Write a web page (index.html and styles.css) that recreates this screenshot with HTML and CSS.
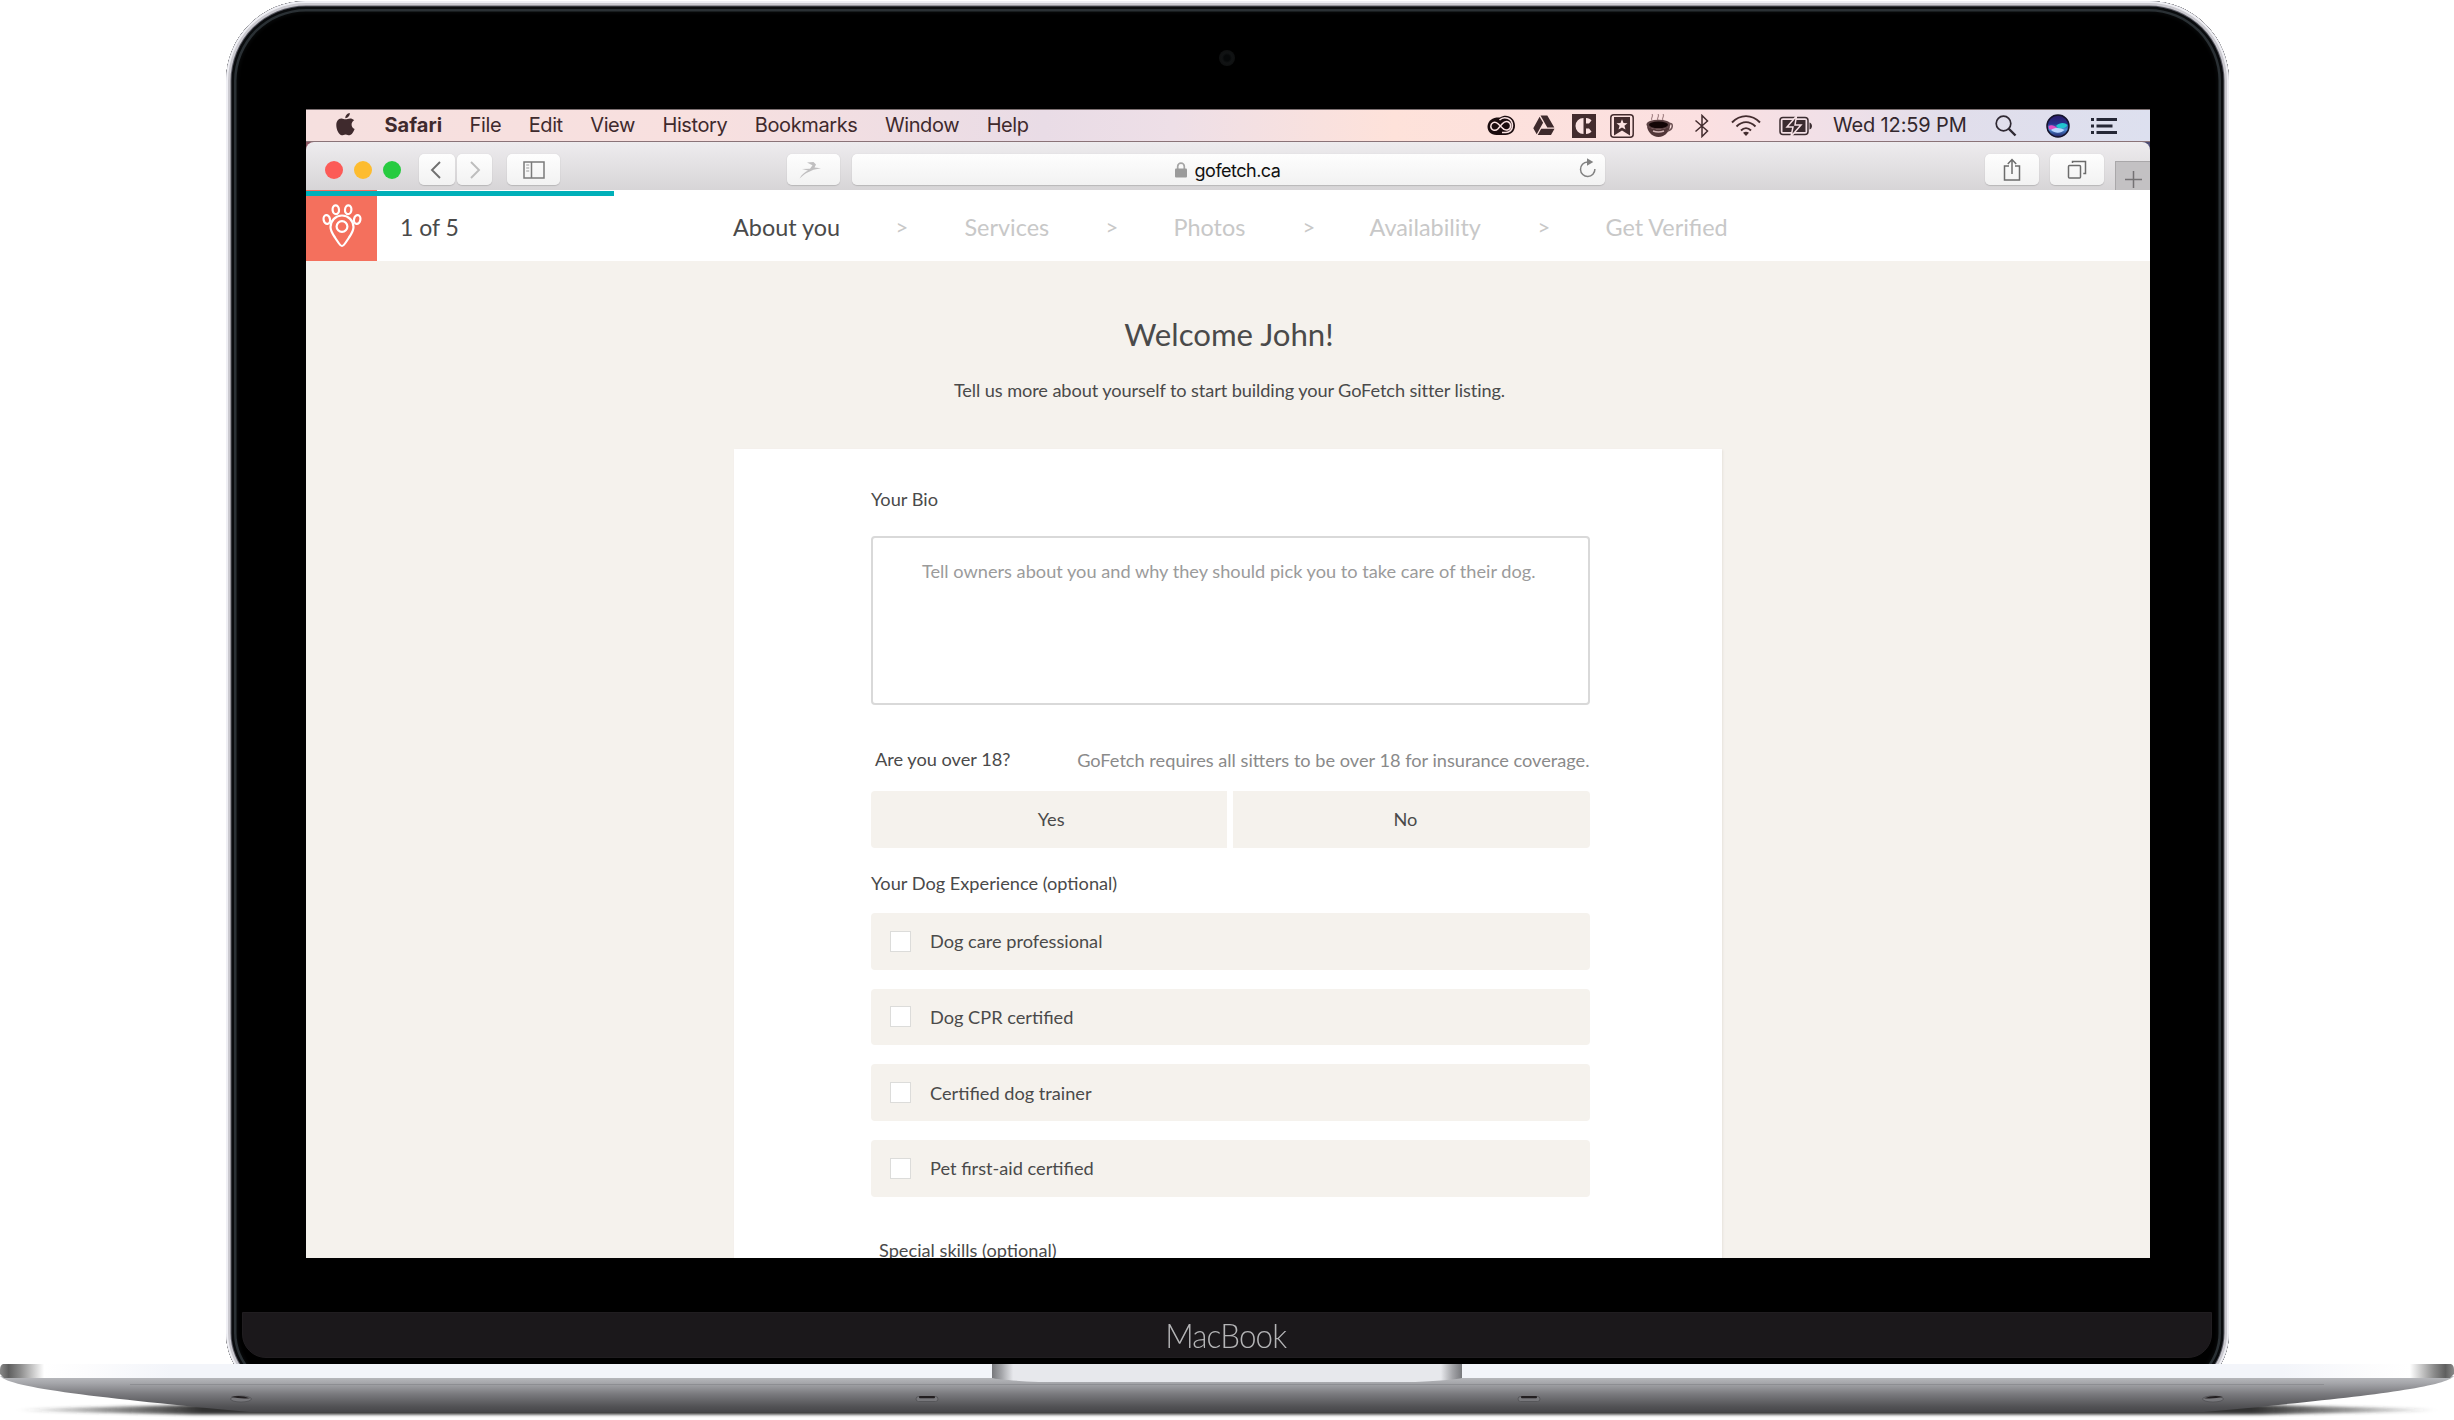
FILE: index.html
```html
<!DOCTYPE html>
<html lang="en">
<head>
<meta charset="utf-8">
<title>GoFetch – About you</title>
<link rel="stylesheet" href="styles.css">
</head>
<body>
<div class="laptop">
  <div class="lid-clip">
    <div class="lid">
      <span class="camera"></span>
      <div class="screen">
        <div class="menubar">
          <nav class="menus">
            <svg class="apple" width="19" height="24" viewBox="0 0 19 24"><path d="M9.3 6.3c-1.2 0-2.3-.9-4.100-.8C2.200 5.700.3 8.300.3 12.200c0 4.700 2.900 10 5.500 10 1.400 0 2-.8 3.800-.8s2.300.8 3.800.8c2.400 0 4.300-3.600 5.200-6.200-3.900-1.700-3.900-6.900-.4-8.700-1.200-1.300-2.700-1.900-4-1.900-2 0-3.200.9-4.900.9zM9.300 5.200c-.1-2.600 2-5 4.500-5.200.2 2.700-2 5.200-4.500 5.200z"/></svg>
            <b>Safari</b><span>File</span><span>Edit</span><span>View</span><span>History</span><span>Bookmarks</span><span>Window</span><span>Help</span>
          </nav>
          <div class="status">
            <svg width="29" height="22" viewBox="0 0 29 22"><path d="M9.500 2.500H13C19-2 28 2 28 10.500c0 6-4.500 9.500-9.500 9.500h-9C-2.500 20-2.500 4 9.500 2.500z" fill="#1b0c0e"/><path d="M17 14.500 11 8.800C7.500 5.500 3.800 8 3.800 11.300c0 4 4.500 5.200 7 2.700l4.500-5.200c3.800-4.500 8.300-1.800 8.300 2 0 4-4.600 5.700-7.600 2.700M12.500 5c4.500-4.500 13-2 13 5.800 0 4-3 6.700-6.500 6.700h-4" fill="none" stroke="#fbe2e2" stroke-width="1.500"/></svg>
            <svg width="22" height="21" viewBox="0 0 22 21"><path d="M7.500.5h6.800l7 12h-7zM6.600 1.800l3.500 6L3.700 19.200.3 13.300zM8.200 13.700h13.300l-3.500 6.300H4.700z" fill="#3e2a2c"/></svg>
            <svg width="24" height="24" viewBox="0 0 24 24"><path d="M0 0h24v24H0z" fill="#432c2e"/><path d="M11.500 4v16a8 8 0 0 1 0-16zM14 4c2.500 0 4.500 1 5.500 2.500L17 9.500h-3zM14 14.500h3l2.500 3c-1 1.500-3 2.500-5.500 2.500z" fill="#fbe2e2"/></svg>
            <svg width="24" height="24" viewBox="0 0 24 24"><rect x=".8" y=".8" width="22.400" height="22.400" rx="3" fill="none" stroke="#432c2e" stroke-width="1.500"/><path d="M4 3h16v18.500l-8-5-8 5z" fill="#432c2e"/><path d="m12 5.200 1.500 3.800 4 .2-3.100 2.500 1.100 3.900-3.500-2.200-3.500 2.200 1.100-3.900L6.500 9.200l4-.2z" fill="#fbe2e2"/></svg>
            <svg width="28" height="24" viewBox="0 0 28 24"><path d="M6 6C4 4 8 3 6 0M12 6c-2-2 2-3 0-6M17 6c-2-2 2-3 0-6" fill="none" stroke="#a68587" stroke-width="1.200"/><ellipse cx="12.500" cy="10.500" rx="12" ry="4.800" fill="#5c4244"/><ellipse cx="12.500" cy="10.800" rx="9.500" ry="3.300" fill="#120506"/><path d="M1 11.500c0 5 3.500 9 7 10.500 3 1.400 6 1.400 9 0 3.500-1.500 7-5.500 7-10.500-4 5-19 5-23 0z" fill="#523739"/><path d="M7 17c3 1 8 1 11 0" fill="none" stroke="#d4b7b8" stroke-width="1.500"/><path d="M23.500 9.500c4-1 4 6-2 7.500" fill="none" stroke="#6c5153" stroke-width="1.500"/></svg>
            <svg width="16" height="24" viewBox="0 0 16 24"><path d="m1.500 6.500 12 10.500L8 22.500v-21L13.500 7l-12 10.500" fill="none" stroke="#432c2e" stroke-width="1.500"/></svg>
            <svg width="30" height="22" viewBox="0 0 30 22"><path d="M1 7.500C9-1 21-1 29 7.500M5.500 11.500c6-5.700 13-5.700 19 0M10 15.500c3-3 7-3 10 0" fill="none" stroke="#432c2e" stroke-width="1.900"/><path d="m15 21-3-3.200c2-1.500 4-1.500 6 0z" fill="#432c2e"/></svg>
            <svg width="34" height="20" viewBox="0 0 34 20"><rect x="1" y="1.500" width="28" height="17" rx="3" fill="none" stroke="#3b2c30" stroke-width="1.500"/><path d="M3.500 4h23v12h-23z" fill="#3b2c30"/><path d="M30.500 6.500c3.300 1 3.300 6 0 7z" fill="#3b2c30"/><path d="M17.500 0 8 11h6l-2 9.500L22 9h-6z" fill="#3b2c30" stroke="#f6e1e5" stroke-width="1.500"/></svg>
            <span class="clock">Wed 12:59 PM</span>
            <svg width="22" height="22" viewBox="0 0 22 22"><circle cx="8.500" cy="8.500" r="7.300" fill="none" stroke="#2f2933" stroke-width="1.700"/><path d="m13.500 13.500 7 7" stroke="#2f2933" stroke-width="2.400"/></svg>
            <svg width="24" height="24" viewBox="0 0 24 24"><defs><linearGradient id="siri" x1="0" y1="0" x2="0" y2="1"><stop offset="0" stop-color="#2b1a66"/><stop offset=".4" stop-color="#25308c"/><stop offset=".65" stop-color="#4b8fd8"/><stop offset="1" stop-color="#201c62"/></linearGradient></defs><circle cx="12" cy="12" r="11" fill="url(#siri)" stroke="#14132b" stroke-width="1.500"/><path d="M2.500 12c3-2 7 0 9 2.500-3 1.500-6 1.500-8.500.5z" fill="#e24fc4"/><path d="M10 12c4-4 9-3.500 11.500-1-1 3-6 4-9 3.500z" fill="#20c4cf"/><path d="M5 16c4-3 10-2 13.500 0-3 3-9 4-13.500 0z" fill="#b9d6ff"/></svg>
            <svg width="26" height="18" viewBox="0 0 26 18"><path d="M0 2.500h3M5.500 2.500H26M0 9h3M5.500 9h16M0 15.500h3M5.500 15.500H26" stroke="#262836" stroke-width="2.800"/></svg>
          </div>
        </div>

        <div class="window">
          <div class="toolbar">
            <div class="lights"><i class="red"></i><i class="amber"></i><i class="green"></i></div>
            <div class="tb back"><svg width="12" height="18" viewBox="0 0 12 18"><path d="M10 1 2 9l8 8" fill="none" stroke="#6f6f6f" stroke-width="1.900"/></svg></div>
            <div class="tb fwd"><svg width="12" height="18" viewBox="0 0 12 18"><path d="m2 1 8 8-8 8" fill="none" stroke="#bdbdbd" stroke-width="1.900"/></svg></div>
            <div class="tb side"><svg width="22" height="18" viewBox="0 0 22 18"><path d="M1 1h20v16H1zM8.500 1v16" fill="none" stroke="#7b7b7b" stroke-width="1.500"/><path d="M3.200 4h3M3.200 7h3M3.200 10h3" stroke="#9a9a9a" stroke-width="1.200"/></svg></div>
            <div class="tb bird"><svg width="22" height="18" viewBox="0 0 22 18"><path d="M.5 17.500C3 13 6 11 9 9.500L3 8l8-.3 2.500-3.500L8 1.500 14.500 1l2.500 2.500-1.500 3 6.500.8-7.500 1.500L8 11.800C5 13.500 3 15.500.5 17.500z" fill="#c0bfc0"/></svg></div>
            <div class="tb url">
              <div class="host"><svg width="12" height="16" viewBox="0 0 12 16"><path d="M2.700 7V4.500a3.300 3.300 0 0 1 6.600 0V7" fill="none" stroke="#a6a6a6" stroke-width="1.700"/><rect y="6.500" width="12" height="9" rx="1" fill="#9b9b9b"/></svg><span>gofetch.ca</span></div>
              <svg class="reload" width="17" height="20" viewBox="0 0 17 20"><path d="M8.500 4a7.200 7.200 0 1 0 7.400 7" fill="none" stroke="#828282" stroke-width="1.500"/><path d="m8 .3 6.300 3.700L8 7.800z" fill="#828282"/></svg>
            </div>
            <div class="tb share"><svg width="18" height="24" viewBox="0 0 18 24"><path d="M6 8H1.500v14h15V8H12M9 16V2M4.800 6 9 1.500 13.200 6" fill="none" stroke="#6c6c6c" stroke-width="1.500"/></svg></div>
            <div class="tb tabs"><svg width="20" height="19" viewBox="0 0 20 19"><rect x="1.500" y="5.500" width="12" height="12.500" rx="1" fill="none" stroke="#6c6c6c" stroke-width="1.500"/><path d="M5.500 3V1.500h13v12h-2.200" fill="none" stroke="#6c6c6c" stroke-width="1.500"/></svg></div>
            <div class="newtab"><svg width="17" height="17" viewBox="0 0 17 17"><path d="M8.500 0v17M0 8.500h17" stroke="#747274" stroke-width="1.500"/></svg></div>
          </div>

          <header class="header">
            <span class="progress"></span>
            <div class="logo"><svg width="40" height="44" viewBox="0 0 40 44" fill="none" stroke="#fff" stroke-width="2.200"><ellipse cx="13.800" cy="5.800" rx="3.200" ry="4.400" transform="rotate(-5 13.800 5.800)"/><ellipse cx="26.200" cy="5.800" rx="3.200" ry="4.400" transform="rotate(5 26.200 5.800)"/><ellipse cx="4.800" cy="15.500" rx="3.200" ry="4.400" transform="rotate(-10 4.800 15.500)"/><ellipse cx="35.200" cy="15.500" rx="3.200" ry="4.400" transform="rotate(10 35.200 15.500)"/><path d="M20 42c-2 0-4-4-7-8.500-3.500-5-4.500-7.500-4.500-10.500a11.500 11.500 0 0 1 23 0c0 3-1 5.500-4.500 10.500C24 38 22 42 20 42z"/><circle cx="20" cy="22.500" r="5.400"/></svg></div>
            <span class="count">1 of 5</span>
            <nav class="steps"><span class="on">About you</span><i>&gt;</i><span>Services</span><i>&gt;</i><span>Photos</span><i>&gt;</i><span>Availability</span><i>&gt;</i><span>Get Verified</span></nav>
          </header>

          <main class="page">
            <h1>Welcome John!</h1>
            <p class="lead">Tell us more about yourself to start building your GoFetch sitter listing.</p>
            <section class="card">
              <p class="label">Your Bio</p>
              <div class="bio">Tell owners about you and why they should pick you to take care of their dog.</div>
              <div class="age"><span>Are you over 18?</span><span class="note">GoFetch requires all sitters to be over 18 for insurance coverage.</span></div>
              <div class="choice"><div class="yes">Yes</div><div class="no">No</div></div>
              <p class="label exp">Your Dog Experience (optional)</p>
              <div class="options">
                <div class="option"><i></i>Dog care professional</div>
                <div class="option"><i></i>Dog CPR certified</div>
                <div class="option"><i></i>Certified dog trainer</div>
                <div class="option"><i></i>Pet first-aid certified</div>
              </div>
              <p class="label skills">Special skills (optional)</p>
            </section>
          </main>
        </div>
      </div>
      <div class="chin"><span>MacBook</span></div>
    </div>
  </div>
  <svg class="base" width="2454" height="56" viewBox="0 0 2454 56">
    <defs>
      <linearGradient id="deck"><stop offset="0" stop-color="#8a8a8a"/><stop offset=".0035" stop-color="#5f5f5f"/><stop offset=".008" stop-color="#8a8a8a"/><stop offset=".018" stop-color="#fff"/><stop offset=".035" stop-color="#fcfcfd"/><stop offset=".07" stop-color="#f3f5fa"/><stop offset=".93" stop-color="#f3f5fa"/><stop offset=".965" stop-color="#fcfcfd"/><stop offset=".982" stop-color="#fff"/><stop offset=".992" stop-color="#8a8a8a"/><stop offset=".9965" stop-color="#5f5f5f"/><stop offset="1" stop-color="#8a8a8a"/></linearGradient>
      <linearGradient id="body" x1="0" y1="0" x2="0" y2="1"><stop offset="0" stop-color="#bcbdc1"/><stop offset=".2" stop-color="#a5a6aa"/><stop offset=".5" stop-color="#7a7a7e"/><stop offset=".85" stop-color="#525255"/><stop offset="1" stop-color="#47474a"/></linearGradient>
      <linearGradient id="notch"><stop offset="0" stop-color="#77787c"/><stop offset=".02" stop-color="#a3a4a8"/><stop offset=".045" stop-color="#e7e8ec"/><stop offset=".955" stop-color="#e7e8ec"/><stop offset=".98" stop-color="#a3a4a8"/><stop offset="1" stop-color="#77787c"/></linearGradient>
      <linearGradient id="ground"><stop offset="0" stop-color="#333" stop-opacity="0"/><stop offset=".03" stop-color="#333" stop-opacity=".45"/><stop offset=".075" stop-color="#333"/><stop offset=".925" stop-color="#333"/><stop offset=".97" stop-color="#333" stop-opacity=".45"/><stop offset="1" stop-color="#333" stop-opacity="0"/></linearGradient>
      <filter id="soft" x="-1%" y="-100%" width="102%" height="300%"><feGaussianBlur stdDeviation="4 1.800"/></filter>
    </defs>
    <path d="M20 45 190 41H2264L2434 45V47L2264 50.500H190L20 47z" fill="url(#ground)" filter="url(#soft)"/>
    <path d="M0 12C10 24 100 34 250 48H2204C2354 34 2444 24 2454 12z" fill="url(#body)"/>
    <path d="M130 20.500H2324" stroke="#8d8e92" stroke-width="1"/>
    <path d="M3 0H2451Q2454 1 2454 6V10L2450 14H4L0 10V6Q0 1 3 0z" fill="url(#deck)"/>
    <path d="M992 0H1462V14Q1455 16 1415 18H1039Q999 16 992 14z" fill="url(#notch)"/>
    <g fill="#77777b" stroke="#505054" stroke-width=".8"><ellipse cx="241" cy="35" rx="10.500" ry="3"/><rect x="916" y="32.500" width="22" height="5" rx="2.500"/><rect x="1518" y="32.500" width="22" height="5" rx="2.500"/><ellipse cx="2213" cy="35" rx="10.500" ry="3"/></g>
    <g fill="#231f21"><path d="M231 33Q240 30.500 250 34.200 240 35 231 33zM2223 33Q2214 30.500 2204 34.200 2214 35 2223 33z"/><rect x="919" y="32" width="16" height="2.200" rx="1"/><rect x="1521" y="32" width="16" height="2.200" rx="1"/></g>
  </svg>
</div>
</body>
</html>
```
FILE: styles.css
```css
* { box-sizing: border-box; }
body { margin: 0; background: #fff; }
h1, p { margin: 0; font-weight: 400; }
i { font-style: normal; }
svg { display: block; flex: none; }

.laptop { width: 2454px; height: 1420px; overflow: hidden; }
.lid-clip { height: 1364px; padding: 1px 0 0 226px; overflow: hidden; }
.lid {
  position: relative;
  width: 2003px; height: 1396px;
  padding: 108px 0 0 80px;
  background: #000;
  border-radius: 80px 80px 64px 64px;
  box-shadow: inset 0 0 0 2px #efeff4, inset 0 0 0 4.500px #cbcad0, inset 0 0 0 5.500px #5a5a63, inset 0 0 0 8px #0a0c0e, inset 0 0 0 10.500px #2a3034, inset 0 0 4px 11px #0d0f10;
}
.camera { position: absolute; left: 993px; top: 49px; width: 16px; height: 16px; border-radius: 50%; background: radial-gradient(#060809 25%, #111314 45%, #0c0d0d); }

.screen { width: 1844px; height: 1149px; overflow: hidden; background: linear-gradient(90deg, #8b5661, #4b4b72); }

.menubar {
  display: flex; align-items: center; justify-content: space-between;
  height: 33px; padding: 0 33px 0 30px;
  border-top: 1px solid #7d7072; border-bottom: 1px solid #8a7378;
  background: linear-gradient(90deg, #f6e0df, #f8e0df 21%, #e9dce6 40%, #eedfe7 47%, #fee2da 59%, #fde1dc 64%, #fbe0e1 76%, #f0e0e8 83%, #e1deeb 89%, #dde0ef);
  font: 20px/30px Inter, sans-serif; letter-spacing: -.4px; color: #3f2a2d;
}
.menus { display: flex; align-items: center; gap: 27.500px; margin-top: -1px; }
.menus b { margin-left: 2px; letter-spacing: 0; font-weight: 700; }
.apple { fill: #3f2a2d; margin-top: -1px; }
.status { display: grid; grid-template-columns: 46px 39px 38px 36px 48px 37px 48px 54px 162px 51px 45px 26px; align-items: center; }
.clock { margin-top: -1px; letter-spacing: -.15px; color: #33282e; }

.toolbar {
  display: flex; align-items: flex-start;
  height: 48px; padding: 12px 0 0 19px;
  border-radius: 8px 8px 0 0;
  background: linear-gradient(#eeecef, #d7d5d7);
}
.lights { display: flex; gap: 11px; padding-top: 7px; width: 94px; }
.lights i { width: 18px; height: 18px; border-radius: 50%; }
.red { background: #fc5b57; }
.amber { background: #fdbc2f; }
.green { background: #27cb40; }
.tb { display: flex; align-items: center; justify-content: center; height: 31px; border-radius: 5px; background: linear-gradient(#fefefe, #f2f2f2); box-shadow: 0 1px 1px #b9b7b9, 0 0 1px #c9c7c9; }
.back { width: 36px; padding-right: 3px; }
.fwd { width: 35px; margin-left: 2px; }
.side { width: 53px; margin-left: 15px; }
.bird { width: 53px; margin-left: 227px; padding-right: 7px; }
.url { width: 753px; margin-left: 12px; padding-right: 9px; }
.host { display: flex; align-items: center; gap: 8px; margin-left: auto; padding-left: 24px; font: 18px/30px Inter, sans-serif; letter-spacing: -.500px; color: #111; }
.host span { padding-top: 2px; }
.reload { margin-left: auto; margin-top: -3px; }
.share { width: 54px; margin-left: 380px; }
.tabs { width: 54px; margin-left: 11px; }
.newtab { display: flex; align-items: center; justify-content: center; width: 35px; height: 29px; margin: 7px 0 0 auto; padding-top: 6px; border: solid #a9a7a9; border-width: 1px 0 0 1px; background: #c3c1c3; }

.header { position: relative; display: flex; height: 71px; background: #fff; font: 23.400px/74px Lato, sans-serif; color: #c8c8c8; }
.progress { position: absolute; left: 0; top: 1px; width: 308px; height: 5px; background: #00b0b9; }
.logo { display: flex; justify-content: center; width: 71px; padding-top: 14px; background: #f4705d; }
.count { width: 356px; padding-left: 23px; color: #4a4a4a; font-size: 23px; }
.steps { display: grid; grid-template-columns: 162.500px 69px 141px 68px 129px 67px 168px 68px auto; white-space: nowrap; }
.steps .on { color: #4a4a4a; }
.steps i { font-size: 22px; }

.page { padding: 53px 0 0; height: 1000px; background: #f5f2ed; font: 18.200px/24px Lato, sans-serif; color: #4a4a4a; }
.page h1 { padding-left: 2px; text-align: center; font-size: 31.200px; line-height: 40px; }
.lead { margin-top: 24px; padding-left: 3px; text-align: center; letter-spacing: -.1px; }
.card { width: 988px; height: 900px; margin: 47px 0 0 427.500px; padding: 38px 132px 0 137.500px; background: #fff; box-shadow: 1px 1px 2px #e6e2dc; }
.bio { height: 169px; margin-top: 25px; padding: 21px 3px 0 0; border: 2px solid #d9d9d9; border-radius: 4px; text-align: center; line-height: 24px; color: #9b9b9b; }
.age { display: flex; justify-content: space-between; margin-top: 42px; padding-left: 4px; white-space: nowrap; }
.note { padding-top: 1px; color: #8a8a8a; }
.choice { display: grid; grid-template-columns: 1fr 1fr; gap: 6px; margin-top: 19px; text-align: center; line-height: 56px; }
.choice div { height: 57px; background: #f5f2ed; }
.yes { padding-left: 4px; border-radius: 4px 0 0 4px; }
.no { padding-right: 12px; border-radius: 0 4px 4px 0; }
.exp { margin-top: 23px; }
.options { display: grid; gap: 19.200px; margin-top: 18px; }
.option { display: flex; align-items: center; gap: 19px; height: 56.500px; padding-left: 19px; border-radius: 4px; background: #f5f2ed; }
.option i { width: 21px; height: 21px; border: 1px solid #dcdcda; background: #fff; }
.skills { margin: 41px 0 0 8px; }

.chin { width: 1970px; height: 46px; margin: 54px 0 0 -64px; border-radius: 0 0 24px 24px; border: 1px solid #201d20; background: #1b181b; text-align: center; font: 300 33px/44px Lato, sans-serif; letter-spacing: -.9px; color: #b4b4b6; }
.chin span { display: inline-block; margin-right: 2px; transform: scaleX(.95); }
.base { overflow: visible; }
```
